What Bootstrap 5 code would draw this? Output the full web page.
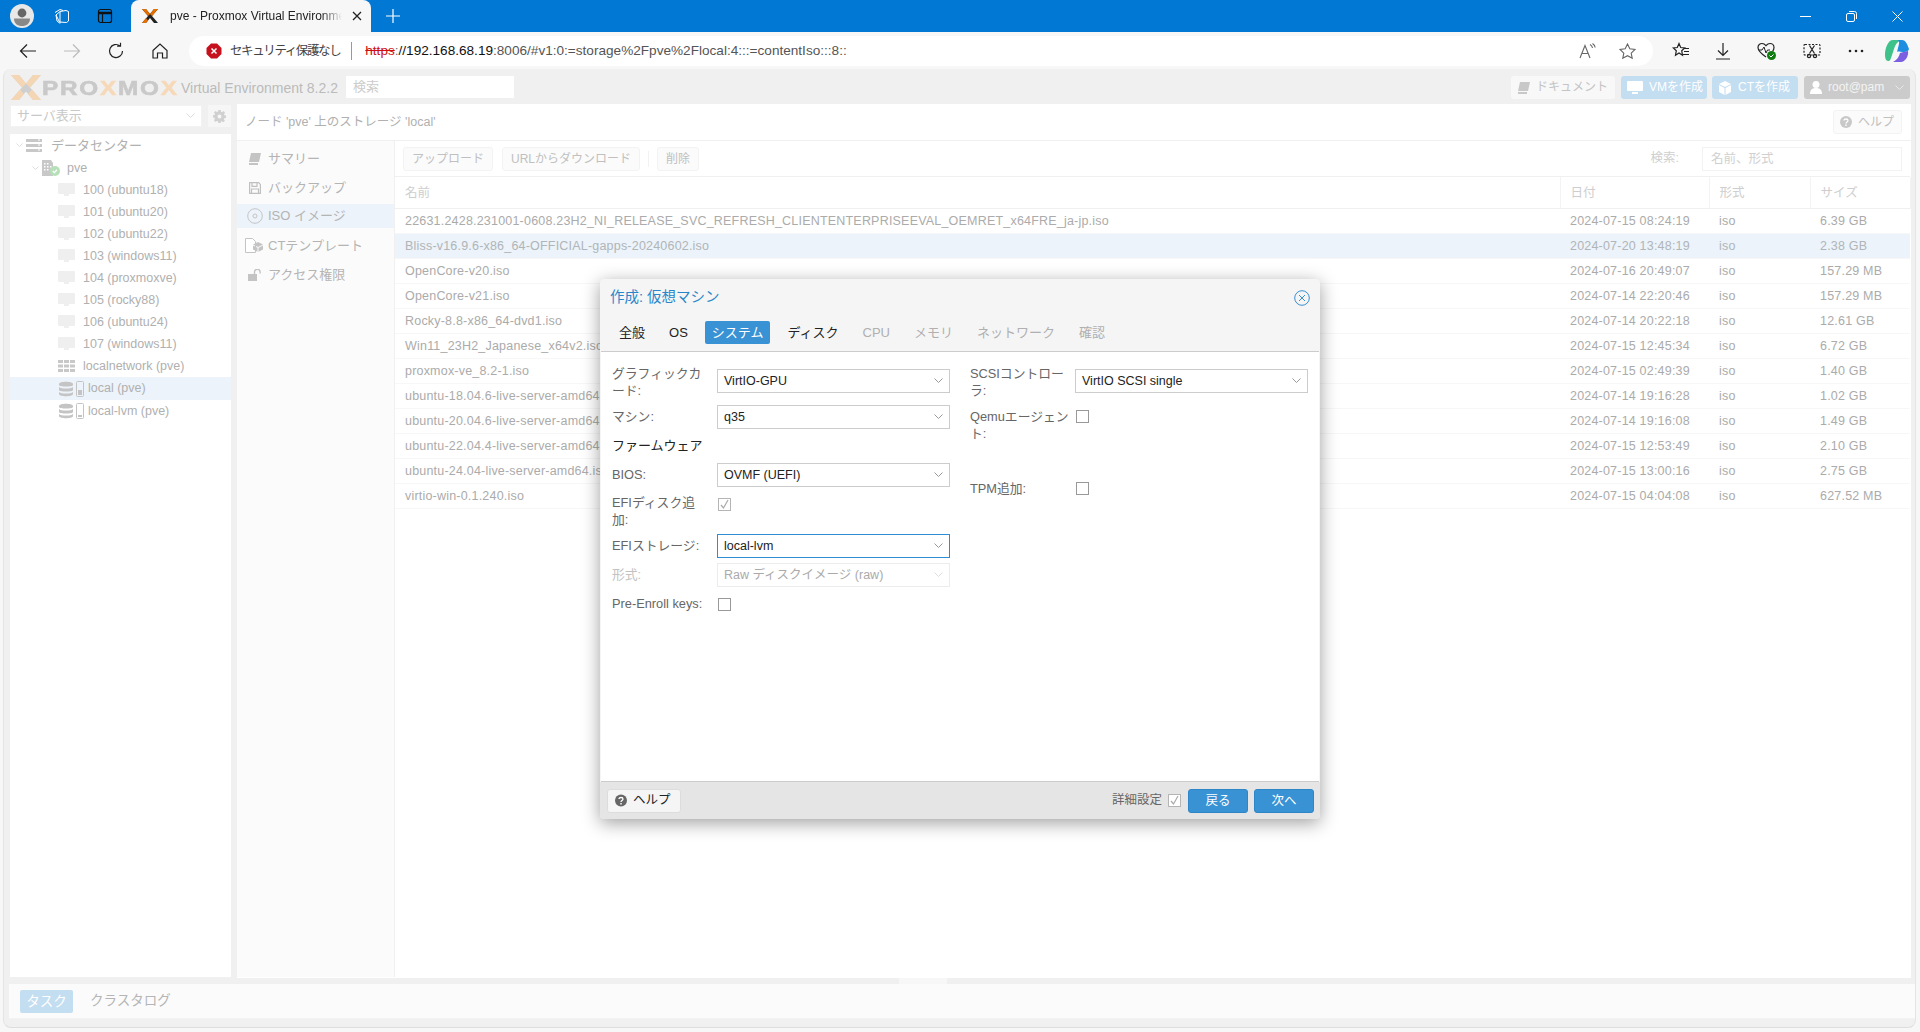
<!doctype html>
<html lang="ja">
<head>
<meta charset="utf-8">
<title>pve - Proxmox Virtual Environment</title>
<link href="https://cdn.jsdelivr.net/npm/bootstrap@5.3.0/dist/css/bootstrap.min.css" rel="stylesheet">
<style>
html,body{height:100%;overflow:hidden}
body{background:#f7f7f7;font-family:"Liberation Sans","Noto Sans CJK JP",sans-serif;font-size:13px;color:#aaa;position:relative}
.win-bar{height:32px;background:#0078d4;color:#fff;flex:none}
.w-ic{flex:none;display:block}
.tab-shape{width:240px;height:32px;margin-left:18px;background:#f7f7f7;border-radius:8px 8px 0 0;color:#222;font-size:12px;padding:0 8px 0 10px}
.tab-title{white-space:nowrap;overflow:hidden;width:172px;margin-left:11px;-webkit-mask-image:linear-gradient(90deg,#000 88%,transparent);mask-image:linear-gradient(90deg,#000 88%,transparent)}
.ctl-box{width:46px;height:32px}
.tool-bar{height:36px;background:#f7f7f7;flex:none;padding:4px 0 2px 0}
.nav-slot{width:44px}
.addr-bar{width:1464px;height:30px;margin-left:7px;background:#fff;border-radius:15px;font-size:13.6px;color:#555;padding:0 14px 0 18px;white-space:nowrap}
.addr-warn{font-size:12.5px;letter-spacing:-1.4px;color:#444}
.addr-sep{width:1px;height:18px;background:#999;margin:0 13px 0 11px}
.addr-http{color:#d01010;text-decoration:line-through}
.addr-host{color:#111}
.app-frame{position:absolute;left:3px;top:69px;width:1913px;height:959px;background:#f0f0f0;border-radius:8px;border-bottom:1px solid #ddd;border-right:1px solid #e4e4e4;border-left:1px solid #e4e4e4;overflow:hidden}
.app-head{height:35px;padding:7px 5px 0 7px}
.brand-x{width:30px;height:25px;margin-top:-1px}
.brand-word{font-family:"Liberation Sans",sans-serif;font-weight:700;font-size:21px;letter-spacing:1.5px;color:#c9c9c9;width:139px;margin-left:1px;line-height:24px;-webkit-text-stroke:.6px currentColor;transform:scaleX(1.16);transform-origin:left center;white-space:nowrap}
.brand-o{color:#f6d9b8}
.brand-ver{font-size:14px;color:#bbb;width:165px;line-height:24px}
.top-search{width:168px;height:22px;background:#fff;color:#ccc;padding:2px 7px;line-height:18px;font-size:13px}
.top-btn{height:23px;padding:0 6px;border-radius:3px;font-size:12px;line-height:23px;border:0;white-space:nowrap;display:flex;align-items:center;gap:6px}
.tb-doc{width:104px;background:#f8f8f8;color:#c4c4c4;margin-right:6px}
.tb-make{width:86px;background:#c3ddf1;color:#fff;margin-right:5px}
.tb-user{width:106px;background:#cbcbcb;color:#f4f4f4;margin-left:1px}
.main-row{height:874px}
.left-col{width:221px;margin-left:6px;flex:none}
.view-row{height:22px;margin-top:1px}
.view-sel{width:192px;height:22px;background:#fff;color:#c8c8c8;padding:0 6px;line-height:22px;border:1px solid #f2f2f2}
.gear-box{width:23px;height:22px;margin-left:6px;background:#f6f6f6}
.tree-box{width:221px;height:843px;margin-top:7px;background:#fff;padding-top:0}
.tree-row{height:22px;white-space:nowrap;color:#b0b0b0;font-size:12.5px;padding-top:0}
.tree-row.sel{background:#ecf3fa;height:23px}
.tree-dc{padding-left:6px;font-size:13px;height:23px}
.tree-pve{padding-left:22px}
.tree-vm{padding-left:48px}
.tree-st{padding-left:49px}
.tree-txt{margin-left:8px}
.tree-fold{margin-right:3px}
.content-col{width:1674px;margin-left:6px;height:874px;flex:none;background:#fff}
.crumb-bar{height:37px;background:#fff;border-bottom:1px solid #f0f0f0;padding:0 9px 0 8px;color:#b0b0b0;font-size:12.5px}
.mini-btn{height:24px;padding:0 8px;border:1px solid #f3f3f3;background:#fbfbfb;border-radius:3px;color:#c0c0c0;font-size:12px;line-height:22px;white-space:nowrap}
.help-top{width:69px;display:flex;align-items:center;gap:6px;padding:0 6px;margin-top:-1px}
.nav-col{width:158px;background:#fbfbfb;border-right:1px solid #f0f0f0;flex:none;height:836px;padding-top:3px}
.nav-item{height:29px;color:#b4b4b4;font-size:13px;padding-left:8px;white-space:nowrap}
.nav-item.active-row{background:#ecf3fa;height:24px;margin-top:2px;margin-bottom:3px}
.nav-ico{width:19px;margin-right:4px}
.iso-area{width:1515px;flex:none}
.iso-tools{height:36px;border-bottom:1px solid #f0f0f0;padding:0 8px;color:#c0c0c0}
.tool-sep{width:1px;height:16px;background:#f2f2f2;margin:0 8px}
.tool-find{width:200px;height:24px;border:1px solid #f2f2f2;color:#d0d0d0;padding:0 8px;font-size:12.5px;line-height:22px;margin-left:23px}
.iso-tbl{table-layout:fixed;width:1515px;margin:0;--bs-table-bg:transparent;font-size:12.5px;color:#ababab}
.iso-tbl th{height:31px;font-weight:400;color:#cecece;font-size:12.5px;padding:2px 10px 0;border-bottom:1px solid #f0f0f0;border-right:1px solid #f3f3f3;vertical-align:middle}
.iso-tbl td{height:25px;padding:2px 10px 0;border-bottom:1px solid #f7f7f7;vertical-align:middle;white-space:nowrap;letter-spacing:.2px}
.iso-tbl tr.pick td{background:#ecf3fa;color:#b0b5b8}
.c-name{width:1165px}.c-date{width:149px}.c-type{width:101px}.c-size{width:100px}
.split-gap{height:6px;position:relative}
.split-tip{position:absolute;left:895px;top:0;width:48px;height:6px;background:#f7f7f7}
.bottom-bar{height:35px;background:#fbfbfb;padding:0 0 0 11px;margin-left:5px;border-bottom:1px solid #f3f3f3}
.task-tab{width:53px;height:23px;background:#c3ddf1;color:#fff;text-align:center;line-height:23px;border-radius:2px;font-size:13.5px}
.log-tab{margin-left:17px;color:#b5b5b5;font-size:13.5px}
.vm-dialog{position:absolute;left:600px;top:279px;width:720px;height:540px;background:#f5f5f5;border-radius:4px;box-shadow:0 4px 18px rgba(0,0,0,.38);z-index:10;overflow:hidden}
.dlg-head{height:36px;padding:1px 10px 0 10px;color:#2a86ca;font-size:14.5px}
.dlg-tabs{height:36px;padding:6px 0 0 12px;gap:10px;color:#222}
.dlg-tab{height:23px;line-height:23px;padding:0 7px;border-radius:2px;white-space:nowrap;font-size:13px}
.dlg-tab.on{background:#3892d4;color:#fff}
.dlg-tab.off{color:#b0b0b0}
.dlg-panel{height:431px;margin:0 1px;background:#fff;border-top:1px solid #ccc;border-bottom:1px solid #ccc;padding:17px 0 0 11px;color:#666;line-height:17px}
.dlg-colL{width:358px;flex:none}
.dlg-colR{width:338px;flex:none}
.frow{display:flex;align-items:center}
.flabel{width:105px;flex:none;font-size:12.8px;color:#666;white-space:nowrap;padding-bottom:1px}
.combo{width:233px;height:24px;border:1px solid #ccc;background:#fff;color:#222;padding:0 6px;font-size:12.5px;line-height:24px;flex:none}
.combo.focus{border-color:#2f8ed3}
.combo.dim{color:#aaa;border-color:#ececec}
.chk{display:block;width:13px;height:13px;border:1px solid #999;background:#fff;flex:none}
.chk.tick{border-color:#b5b5b5;position:relative}
.r-36{height:36px}.r-24{height:24px}
.after-5{margin-top:5px}.after-7{margin-top:7px}
.fw-title{height:17px;margin:8px 0 9px;color:#222;font-size:13px}
.dlg-foot{height:37px;background:#e5e5e5;padding:0 6px 0 7px}
.help-btn{width:74px;height:24px;background:#f5f5f5;border:1px solid #ddd;border-radius:3px;color:#222;font-size:12.5px;gap:6px;padding:0 7px}
.act-btn{width:60px;height:24px;background:#3892d4;border:1px solid #2f86c7;border-radius:3px;color:#fff;font-size:12.5px;padding:0;line-height:22px}
.muted-lbl{color:#666;font-size:12.5px;margin-right:6px}
.dim-lbl{color:#c2c2c2}
</style>
</head>
<body>
<div class="d-flex flex-column">
  <div class="win-bar d-flex align-items-start">
    <div class="d-flex align-items-center" style="height:32px;padding-left:10px">
      <svg class="w-ic" width="24" height="24" viewBox="0 0 24 24"><circle cx="12" cy="12" r="12" fill="#e8e8e8"/><circle cx="12" cy="9" r="4.400" fill="#666"/><path d="M4 14.500h16c0 5-3.500 7.500-8 7.500s-8-2.500-8-7.500z" fill="#888"/></svg>
      <svg class="w-ic" style="margin-left:19px" width="18" height="18" viewBox="0 0 18 18" fill="none" stroke="#fff" stroke-width="1"><path d="M2 5.500l5-3 3 1"/><path d="M3 8l4-3.500 6-1 2.500 1v9.500l-2 1.500-7-.5z"/><path d="M7 5v11.500M3 8l1 6 2.500 2"/></svg>
      <svg class="w-ic" style="margin-left:26px" width="16" height="16" viewBox="0 0 16 16" fill="none" stroke="#111" stroke-width="1.200"><rect x="1.500" y="1.500" width="13" height="13" rx="2"/><path d="M1.500 5h13" stroke-width="2.500"/><path d="M5.500 5v9"/></svg>
    </div>
    <div class="tab-shape d-flex align-items-center">
      <svg class="w-ic" width="18" height="16" viewBox="0 0 18 16"><path d="M1 1h4l4 5 4-5h4l-6 7 6 7h-4l-4-5-4 5H1l6-7z" fill="#222"/><path d="M1 1h4l4 5-2 2zM17 1h-4l-4 5 2 2zM1 15h4l2-2.500-2-2.500z" fill="#e57000"/></svg>
      <div class="tab-title">pve - Proxmox Virtual Environment</div>
      <svg class="w-ic ms-auto" width="12" height="12" viewBox="0 0 12 12" stroke="#222" stroke-width="1.300"><path d="M2 2l8 8M10 2l-8 8"/></svg>
    </div>
    <div class="d-flex align-items-center" style="height:32px;margin-left:15px">
      <svg class="w-ic" width="14" height="14" viewBox="0 0 14 14" stroke="#fff" stroke-width="1.200"><path d="M7 0v14M0 7h14"/></svg>
    </div>
    <div class="ms-auto d-flex">
      <div class="ctl-box d-flex align-items-center justify-content-center"><svg width="11" height="11" viewBox="0 0 11 11" stroke="#fff"><path d="M0 5.500h11"/></svg></div>
      <div class="ctl-box d-flex align-items-center justify-content-center"><svg width="11" height="11" viewBox="0 0 11 11" fill="none" stroke="#fff"><rect x=".5" y="2.500" width="8" height="8" rx="1.500"/><path d="M3 .5h5.500a2 2 0 012 2V8"/></svg></div>
      <div class="ctl-box d-flex align-items-center justify-content-center"><svg width="11" height="11" viewBox="0 0 11 11" stroke="#fff"><path d="M.5.5l10 10M10.500.5l-10 10"/></svg></div>
    </div>
  </div>
  <div class="tool-bar d-flex align-items-center">
    <div class="nav-slot d-flex justify-content-center" style="margin-left:6px"><svg width="18" height="18" viewBox="0 0 18 18" fill="none" stroke="#222" stroke-width="1.200"><path d="M17 9H1.500M8 2.500L1.500 9 8 15.500"/></svg></div>
    <div class="nav-slot d-flex justify-content-center"><svg width="18" height="18" viewBox="0 0 18 18" fill="none" stroke="#bbb" stroke-width="1.200"><path d="M1 9h15.500M10 2.500L16.500 9 10 15.500"/></svg></div>
    <div class="nav-slot d-flex justify-content-center"><svg width="18" height="18" viewBox="0 0 18 18" fill="none" stroke="#222" stroke-width="1.200"><path d="M15.500 9a6.500 6.500 0 11-2.500-5.100M13.500 .8v3.400h-3.400"/></svg></div>
    <div class="nav-slot d-flex justify-content-center"><svg width="18" height="18" viewBox="0 0 18 18" fill="none" stroke="#222" stroke-width="1.200"><path d="M2 8.500L9 2l7 6.500V16h-4.500v-5h-5v5H2z"/></svg></div>
    <div class="addr-bar d-flex align-items-center">
      <svg class="w-ic" width="16" height="16" viewBox="0 0 16 16" style="margin:0 8px 0 -1px"><path d="M5 .5h6L15.500 5v6L11 15.500H5L.5 11V5z" fill="#c6101d"/><path d="M5.500 5.500l5 5M10.500 5.500l-5 5" stroke="#fff" stroke-width="1.500"/></svg>
      <span class="addr-warn">セキュリティ保護なし</span>
      <span class="addr-sep"></span>
      <span><span class="addr-http">https</span><span style="color:#777">:</span><span class="addr-host">//192.168.68.19</span>:8006/#v1:0:=storage%2Fpve%2Flocal:4:::=contentIso:::8::</span>
      <svg class="w-ic ms-auto" style="margin-right:22px" width="18" height="16" viewBox="0 0 18 16" fill="none" stroke="#666" stroke-width="1.100"><path d="M1 15L6 2.500 11 15M2.800 10.500h6.500M11 1.500c1.500.8 2.300 2 2.500 3.500M13.500 .5c1.500 1 2.500 2.300 2.700 4"/></svg>
      <svg class="w-ic" style="margin-right:3px" width="17" height="17" viewBox="0 0 17 17" fill="none" stroke="#666" stroke-width="1.100"><path d="M8.500 1l2.300 4.800 5.200.7-3.800 3.600 1 5.200-4.700-2.600-4.700 2.600 1-5.200L1 6.500l5.200-.7z"/></svg>
    </div>
    <svg class="w-ic" style="margin-left:19px" width="18" height="18" viewBox="0 0 18 18" fill="none" stroke="#222" stroke-width="1.200"><path d="M7 1.500l1.700 4 4 .4-3 2.800.8 4.500-3.500-2.200-3.500 2.200.8-4.500-3-2.800 4-.4zM12 6.500h5M12 9.500h5M11 12.500h6"/></svg>
    <svg class="w-ic" style="margin-left:26px" width="14" height="18" viewBox="0 0 14 18" fill="none" stroke="#222" stroke-width="1.200"><path d="M7 1v12M2 8.500L7 13.500l5-5M0 17h14"/></svg>
    <svg class="w-ic" style="margin-left:27px" width="20" height="18" viewBox="0 0 20 18" fill="none"><path d="M9 15C4 11.500 1 9 1 5.500 1 3 3 1.500 5 1.500c1.700 0 3 1 4 2.200 1-1.200 2.300-2.200 4-2.200 2 0 4 1.500 4 4 0 1.500-.5 2.700-1.500 4" stroke="#222" stroke-width="1.200"/><path d="M2 8h3l2-3 2 6 1.500-3H13" stroke="#222"/><circle cx="14.500" cy="13.500" r="4.500" fill="#107c10"/><path d="M12.500 13.500l1.500 1.500 2.500-2.500" stroke="#fff"/></svg>
    <svg class="w-ic" style="margin-left:26px" width="18" height="18" viewBox="0 0 18 18" fill="none" stroke="#222" stroke-width="1.200"><rect x="1" y="2.500" width="16" height="10.500" rx="1" stroke-dasharray="2 1.500"/><path d="M6.500 3.500l5 8M11.500 3.500l-5 8"/><circle cx="6" cy="14" r="1.600"/><circle cx="12" cy="14" r="1.600"/></svg>
    <svg class="w-ic" style="margin-left:27px" width="16" height="4" viewBox="0 0 16 4" fill="#222"><circle cx="2" cy="2" r="1.300"/><circle cx="8" cy="2" r="1.300"/><circle cx="14" cy="2" r="1.300"/></svg>
    <svg class="w-ic" style="margin-left:21px" width="24" height="24" viewBox="0 0 24 24"><path d="M8 1h8c-4 2-6 5-7 9l-3 9c-1 3-2 3-3 3-2 0-3-3-3-6C0 9 3 1 8 1z" fill="#3fc18a"/><path d="M12 1h5c3 0 5 3 7 9 0 1-2 3-5 3-4 0-6-1-7 0l2-8c.5-2-.5-4-2-4z" fill="#1e8fe0"/><path d="M16 23H8c4-2 6-5 7-9 2-1 5-1 8-2 1 5-3 11-7 11z" fill="#7b5fe0"/></svg>
  </div>
</div>

<div class="app-frame d-flex flex-column">
  <div class="app-head d-flex align-items-start">
    <svg class="brand-x w-ic" viewBox="0 0 30 25"><path d="M0 0h8l7 8.500L22 0h8L19 12.500 30 25h-8l-7-8.500L8 25H0l11-12.500z" fill="#cfcfcf"/><path d="M0 0h8l7 8.500-4 4zM30 0h-8l-7 8.500 4 4zM0 25h8l5-6-4-4.500zM30 25h-8l-5-6 4-4.500z" fill="#f5d6b4"/></svg>
    <div class="brand-word">PRO<span class="brand-o">X</span>MO<span class="brand-o">X</span></div>
    <div class="brand-ver">Virtual Environment 8.2.2</div>
    <div class="top-search">検索</div>
    <button class="btn top-btn tb-doc ms-auto" type="button">
      <svg class="w-ic" width="13" height="12" viewBox="0 0 13 12" fill="#c8c8c8"><path d="M3 0h10l-2 9H1zM1 10h9v2H1z"/></svg><span>ドキュメント</span>
    </button>
    <button class="btn top-btn tb-make" type="button">
      <svg class="w-ic" width="16" height="14" viewBox="0 0 16 14" fill="#fff"><path d="M1 0h14a1 1 0 011 1v8a1 1 0 01-1 1H1a1 1 0 01-1-1V1a1 1 0 011-1zM5 11h6v2H5z"/></svg><span>VMを作成</span>
    </button>
    <button class="btn top-btn tb-make" type="button">
      <svg class="w-ic" width="14" height="14" viewBox="0 0 14 14" fill="#fff"><path d="M7 0l6 3-6 3-6-3zM1 4l5.500 3v7L1 11zM13 4L7.500 7v7l5.500-3z"/></svg><span>CTを作成</span>
    </button>
    <button class="btn top-btn tb-user" type="button">
      <svg class="w-ic" width="12" height="13" viewBox="0 0 12 13" fill="#fff"><circle cx="6" cy="3.500" r="3.500"/><path d="M0 13c0-4 2-6 6-6s6 2 6 6z"/></svg><span>root@pam</span>
      <svg class="w-ic ms-auto" width="9" height="6" viewBox="0 0 9 6" fill="none" stroke="#e8e8e8"><path d="M.5 .5l4 4 4-4"/></svg>
    </button>
  </div>
  <div class="main-row d-flex">
    <div class="left-col">
      <div class="view-row d-flex">
        <div class="view-sel d-flex align-items-center justify-content-between"><span>サーバ表示</span><svg width="9" height="6" viewBox="0 0 9 6" fill="none" stroke="#ddd"><path d="M.5 .5l4 4 4-4"/></svg></div>
        <div class="gear-box d-flex align-items-center justify-content-center"><svg width="13" height="13" viewBox="0 0 13 13" fill="#d0d0d0"><path d="M5.300 0h2.400l.3 1.800 1 .4L10.500 1l1.600 1.700-1.100 1.500.4 1 1.600.3v2.300l-1.700.4-.4 1 1 1.500-1.600 1.600-1.500-1-1 .4L7.700 13H5.300L5 11.300l-1-.4-1.500 1-1.600-1.600 1-1.500-.4-1L0 7.500V5.200l1.600-.3.400-1L1 2.500 2.600 1 4 2.100l1-.4zM6.500 4.500a2 2 0 100 4 2 2 0 000-4z"/></svg></div>
      </div>
      <div class="tree-box">
        <div class="tree-row tree-dc d-flex align-items-center"><svg class="w-ic tree-fold" width="7" height="5" viewBox="0 0 7 5" fill="none" stroke="#ddd"><path d="M.5 .5l3 3 3-3"/></svg><svg class="w-ic" width="16" height="13" viewBox="0 0 16 13" fill="#c8c8c8"><path d="M0 0h16v3H0zM0 5h16v3H0zM0 10h16v3H0z"/><path d="M12 1h2M12 6h2M12 11h2" stroke="#fff"/></svg><span style="margin-left:9px">データセンター</span></div>
        <div class="tree-row tree-pve d-flex align-items-center"><svg class="w-ic tree-fold" width="7" height="5" viewBox="0 0 7 5" fill="none" stroke="#ddd"><path d="M.5 .5l3 3 3-3"/></svg><svg class="w-ic" width="18" height="16" viewBox="0 0 18 16"><path d="M0 0h9l2 3v13H0z" fill="#c8c8c8"/><path d="M2 3h1.500v1.500H2zM5 3h1.500v1.500H5zM2 6h1.500v1.500H2zM5 6h1.500v1.500H5zM8 6h1.500v1.500H8zM2 9h1.500v1.500H2zM5 9h1.500v1.500H5z" fill="#fff"/><circle cx="13" cy="11" r="5" fill="#b6e0b8"/><path d="M10.800 11l1.600 1.600 2.600-2.800" stroke="#fff" stroke-width="1.300" fill="none"/></svg><span style="margin-left:7px">pve</span></div>
        <div class="tree-row tree-vm d-flex align-items-center"><svg class="w-ic" width="17" height="14" viewBox="0 0 17 14" fill="#efefef"><path d="M1 0h15a1 1 0 011 1v9a1 1 0 01-1 1H1a1 1 0 01-1-1V1a1 1 0 011-1zM6 11h5v2H6z"/></svg><span class="tree-txt">100 (ubuntu18)</span></div>
        <div class="tree-row tree-vm d-flex align-items-center"><svg class="w-ic" width="17" height="14" viewBox="0 0 17 14" fill="#efefef"><path d="M1 0h15a1 1 0 011 1v9a1 1 0 01-1 1H1a1 1 0 01-1-1V1a1 1 0 011-1zM6 11h5v2H6z"/></svg><span class="tree-txt">101 (ubuntu20)</span></div>
        <div class="tree-row tree-vm d-flex align-items-center"><svg class="w-ic" width="17" height="14" viewBox="0 0 17 14" fill="#efefef"><path d="M1 0h15a1 1 0 011 1v9a1 1 0 01-1 1H1a1 1 0 01-1-1V1a1 1 0 011-1zM6 11h5v2H6z"/></svg><span class="tree-txt">102 (ubuntu22)</span></div>
        <div class="tree-row tree-vm d-flex align-items-center"><svg class="w-ic" width="17" height="14" viewBox="0 0 17 14" fill="#efefef"><path d="M1 0h15a1 1 0 011 1v9a1 1 0 01-1 1H1a1 1 0 01-1-1V1a1 1 0 011-1zM6 11h5v2H6z"/></svg><span class="tree-txt">103 (windows11)</span></div>
        <div class="tree-row tree-vm d-flex align-items-center"><svg class="w-ic" width="17" height="14" viewBox="0 0 17 14" fill="#efefef"><path d="M1 0h15a1 1 0 011 1v9a1 1 0 01-1 1H1a1 1 0 01-1-1V1a1 1 0 011-1zM6 11h5v2H6z"/></svg><span class="tree-txt">104 (proxmoxve)</span></div>
        <div class="tree-row tree-vm d-flex align-items-center"><svg class="w-ic" width="17" height="14" viewBox="0 0 17 14" fill="#efefef"><path d="M1 0h15a1 1 0 011 1v9a1 1 0 01-1 1H1a1 1 0 01-1-1V1a1 1 0 011-1zM6 11h5v2H6z"/></svg><span class="tree-txt">105 (rocky88)</span></div>
        <div class="tree-row tree-vm d-flex align-items-center"><svg class="w-ic" width="17" height="14" viewBox="0 0 17 14" fill="#efefef"><path d="M1 0h15a1 1 0 011 1v9a1 1 0 01-1 1H1a1 1 0 01-1-1V1a1 1 0 011-1zM6 11h5v2H6z"/></svg><span class="tree-txt">106 (ubuntu24)</span></div>
        <div class="tree-row tree-vm d-flex align-items-center"><svg class="w-ic" width="17" height="14" viewBox="0 0 17 14" fill="#efefef"><path d="M1 0h15a1 1 0 011 1v9a1 1 0 01-1 1H1a1 1 0 01-1-1V1a1 1 0 011-1zM6 11h5v2H6z"/></svg><span class="tree-txt">107 (windows11)</span></div>
        <div class="tree-row tree-vm d-flex align-items-center"><svg class="w-ic" width="17" height="12" viewBox="0 0 17 12" fill="#c8c8c8"><path d="M0 0h5v3H0zM6 0h5v3H6zM12 0h5v3h-5zM0 4.500h5v3H0zM6 4.500h5v3H6zM12 4.500h5v3h-5zM0 9h5v3H0zM6 9h5v3H6zM12 9h5v3h-5z"/></svg><span class="tree-txt">localnetwork (pve)</span></div>
        <div class="tree-row tree-st sel d-flex align-items-center"><svg class="w-ic" width="25" height="16" viewBox="0 0 25 16"><path d="M0 3c0-3 14-3 14 0v1c0 2-14 2-14 0zM0 6c2 2 12 2 14 0v3c0 2-14 2-14 0zM0 11c2 2 12 2 14 0v2c0 3-14 3-14 0z" fill="#c4c4c4"/><rect x="17.500" y=".5" width="7" height="15" rx="1" fill="none" stroke="#c4c4c4"/><rect x="19" y="9" width="4" height="5" fill="#c4c4c4"/></svg><span style="margin-left:4px">local (pve)</span></div>
        <div class="tree-row tree-st d-flex align-items-center"><svg class="w-ic" width="25" height="16" viewBox="0 0 25 16"><path d="M0 3c0-3 14-3 14 0v1c0 2-14 2-14 0zM0 6c2 2 12 2 14 0v3c0 2-14 2-14 0zM0 11c2 2 12 2 14 0v2c0 3-14 3-14 0z" fill="#c4c4c4"/><rect x="17.500" y=".5" width="7" height="15" rx="1" fill="none" stroke="#c4c4c4"/><rect x="19" y="12" width="4" height="2" fill="#c4c4c4"/></svg><span style="margin-left:4px">local-lvm (pve)</span></div>
      </div>
    </div>
    <div class="content-col">
      <div class="crumb-bar d-flex align-items-center justify-content-between">
        <span>ノード 'pve' 上のストレージ 'local'</span>
        <button class="btn mini-btn help-top" type="button"><svg class="w-ic" width="12" height="12" viewBox="0 0 12 12"><circle cx="6" cy="6" r="6" fill="#c8c8c8"/><path d="M4 4.500C4 2.500 8 2.500 8 4.500c0 1.500-2 1.500-2 3" fill="none" stroke="#fff" stroke-width="1.300"/><path d="M5.300 8.500h1.400V10H5.300z" fill="#fff"/></svg><span>ヘルプ</span></button>
      </div>
      <div class="d-flex">
        <div class="nav-col">
          <div class="nav-item d-flex align-items-center"><span class="nav-ico d-flex justify-content-center"><svg width="13" height="12" viewBox="0 0 13 12" fill="#c4c4c4"><path d="M3 0h10l-2 9H1zM1 10h9v2H1z"/></svg></span>サマリー</div>
          <div class="nav-item d-flex align-items-center"><span class="nav-ico d-flex justify-content-center"><svg width="12" height="12" viewBox="0 0 12 12" fill="none" stroke="#c0c0c0" stroke-width="1.200"><path d="M.6.6h9l1.800 1.800v9H.6zM3 .8v3.500h5V.8M2.500 11V7h7v4"/></svg></span>バックアップ</div>
          <div class="nav-item active-row d-flex align-items-center"><span class="nav-ico d-flex justify-content-center"><svg width="16" height="16" viewBox="0 0 16 16" fill="none" stroke="#c4c4c4"><circle cx="8" cy="8" r="7.300"/><circle cx="8" cy="8" r="2"/></svg></span>ISO イメージ</div>
          <div class="nav-item d-flex align-items-center"><span class="nav-ico d-flex justify-content-center"><svg width="19" height="15" viewBox="0 0 19 15"><path d="M.5.5h7l3 3v11H.5z" fill="#fff" stroke="#c4c4c4"/><path d="M13 4l5 2.500L13 9 8 6.500zM8 7.500l4.500 2.300v4L8 11.500zM18 7.500l-4.500 2.300v4l4.500-2.300z" fill="#c4c4c4"/></svg></span>CTテンプレート</div>
          <div class="nav-item d-flex align-items-center"><span class="nav-ico d-flex justify-content-center"><svg width="14" height="12" viewBox="0 0 14 12"><rect y="5" width="9" height="7" fill="#c4c4c4"/><path d="M6.500 5V3a2.800 2.800 0 015.600 0v1.500" fill="none" stroke="#c4c4c4" stroke-width="1.400"/></svg></span>アクセス権限</div>
        </div>
        <div class="iso-area">
          <div class="iso-tools d-flex align-items-center">
            <button class="btn mini-btn" type="button">アップロード</button>
            <button class="btn mini-btn" style="margin-left:9px" type="button">URLからダウンロード</button>
            <span class="tool-sep"></span>
            <button class="btn mini-btn" type="button">削除</button>
            <span class="ms-auto" style="font-size:12.500px;color:#cfcfcf">検索:</span>
            <div class="tool-find">名前、形式</div>
          </div>
          <table class="table iso-tbl">
            <thead><tr><th class="c-name">名前</th><th class="c-date">日付</th><th class="c-type">形式</th><th class="c-size">サイズ</th></tr></thead>
            <tbody>
              <tr><td>22631.2428.231001-0608.23H2_NI_RELEASE_SVC_REFRESH_CLIENTENTERPRISEEVAL_OEMRET_x64FRE_ja-jp.iso</td><td>2024-07-15 08:24:19</td><td>iso</td><td>6.39 GB</td></tr>
              <tr class="pick"><td>Bliss-v16.9.6-x86_64-OFFICIAL-gapps-20240602.iso</td><td>2024-07-20 13:48:19</td><td>iso</td><td>2.38 GB</td></tr>
              <tr><td>OpenCore-v20.iso</td><td>2024-07-16 20:49:07</td><td>iso</td><td>157.29 MB</td></tr>
              <tr><td>OpenCore-v21.iso</td><td>2024-07-14 22:20:46</td><td>iso</td><td>157.29 MB</td></tr>
              <tr><td>Rocky-8.8-x86_64-dvd1.iso</td><td>2024-07-14 20:22:18</td><td>iso</td><td>12.61 GB</td></tr>
              <tr><td>Win11_23H2_Japanese_x64v2.iso</td><td>2024-07-15 12:45:34</td><td>iso</td><td>6.72 GB</td></tr>
              <tr><td>proxmox-ve_8.2-1.iso</td><td>2024-07-15 02:49:39</td><td>iso</td><td>1.40 GB</td></tr>
              <tr><td>ubuntu-18.04.6-live-server-amd64.iso</td><td>2024-07-14 19:16:28</td><td>iso</td><td>1.02 GB</td></tr>
              <tr><td>ubuntu-20.04.6-live-server-amd64.iso</td><td>2024-07-14 19:16:08</td><td>iso</td><td>1.49 GB</td></tr>
              <tr><td>ubuntu-22.04.4-live-server-amd64.iso</td><td>2024-07-15 12:53:49</td><td>iso</td><td>2.10 GB</td></tr>
              <tr><td>ubuntu-24.04-live-server-amd64.iso</td><td>2024-07-15 13:00:16</td><td>iso</td><td>2.75 GB</td></tr>
              <tr><td>virtio-win-0.1.240.iso</td><td>2024-07-15 04:04:08</td><td>iso</td><td>627.52 MB</td></tr>
            </tbody>
          </table>
        </div>
      </div>
    </div>
  </div>
  <div class="split-gap"><div class="split-tip"></div></div>
  <div class="bottom-bar d-flex align-items-center">
    <div class="task-tab">タスク</div>
    <div class="log-tab">クラスタログ</div>
  </div>
</div>

<div class="vm-dialog d-flex flex-column">
  <div class="dlg-head d-flex align-items-center justify-content-between">
    <span>作成: 仮想マシン</span>
    <svg class="w-ic" width="16" height="16" viewBox="0 0 16 16" fill="none" stroke="#3a8fcf"><circle cx="8" cy="8" r="7.300"/><path d="M5 5l6 6M11 5l-6 6"/></svg>
  </div>
  <div class="dlg-tabs d-flex">
    <div class="dlg-tab">全般</div>
    <div class="dlg-tab">OS</div>
    <div class="dlg-tab on">システム</div>
    <div class="dlg-tab">ディスク</div>
    <div class="dlg-tab off">CPU</div>
    <div class="dlg-tab off">メモリ</div>
    <div class="dlg-tab off">ネットワーク</div>
    <div class="dlg-tab off">確認</div>
  </div>
  <div class="dlg-panel d-flex">
    <div class="dlg-colL">
      <div class="frow r-36 align-items-start">
        <div class="flabel" style="margin-top:-4px">グラフィックカ<br>ード:</div>
        <div class="combo d-flex justify-content-between align-items-center"><span>VirtIO-GPU</span><svg class="w-ic" width="9" height="6" viewBox="0 0 9 6" fill="none" stroke="#999"><path d="M.5 .5l4 4 4-4"/></svg></div>
      </div>
      <div class="frow r-24">
        <div class="flabel">マシン:</div>
        <div class="combo d-flex justify-content-between align-items-center"><span>q35</span><svg class="w-ic" width="9" height="6" viewBox="0 0 9 6" fill="none" stroke="#999"><path d="M.5 .5l4 4 4-4"/></svg></div>
      </div>
      <div class="fw-title">ファームウェア</div>
      <div class="frow r-24">
        <div class="flabel">BIOS:</div>
        <div class="combo d-flex justify-content-between align-items-center"><span>OVMF (UEFI)</span><svg class="w-ic" width="9" height="6" viewBox="0 0 9 6" fill="none" stroke="#999"><path d="M.5 .5l4 4 4-4"/></svg></div>
      </div>
      <div class="frow align-items-start after-7" style="height:40px">
        <div class="flabel">EFIディスク追<br>加:</div>
        <span class="chk tick" style="margin:4px 0 0 1px"><svg class="w-ic" width="11" height="11" viewBox="0 0 11 11" fill="none" stroke="#aaa" stroke-width="1.200"><path d="M2 6l2.500 3L9 1"/></svg></span>
      </div>
      <div class="frow r-24">
        <div class="flabel">EFIストレージ:</div>
        <div class="combo focus d-flex justify-content-between align-items-center"><span>local-lvm</span><svg class="w-ic" width="9" height="6" viewBox="0 0 9 6" fill="none" stroke="#999"><path d="M.5 .5l4 4 4-4"/></svg></div>
      </div>
      <div class="frow r-24 after-5">
        <div class="flabel dim-lbl">形式:</div>
        <div class="combo dim d-flex justify-content-between align-items-center"><span>Raw ディスクイメージ (raw)</span><svg class="w-ic" width="9" height="6" viewBox="0 0 9 6" fill="none" stroke="#ddd"><path d="M.5 .5l4 4 4-4"/></svg></div>
      </div>
      <div class="frow r-24 after-5">
        <div class="flabel">Pre-Enroll keys:</div>
        <span class="chk" style="margin-left:1px"></span>
      </div>
    </div>
    <div class="dlg-colR">
      <div class="frow r-36 align-items-start">
        <div class="flabel" style="margin-top:-4px">SCSIコントロー<br>ラ:</div>
        <div class="combo d-flex justify-content-between align-items-center"><span>VirtIO SCSI single</span><svg class="w-ic" width="9" height="6" viewBox="0 0 9 6" fill="none" stroke="#999"><path d="M.5 .5l4 4 4-4"/></svg></div>
      </div>
      <div class="frow align-items-start" style="height:72px">
        <div class="flabel" style="margin-top:3px">Qemuエージェン<br>ト:</div>
        <span class="chk" style="margin:5px 0 0 1px"></span>
      </div>
      <div class="frow" style="height:23px">
        <div class="flabel">TPM追加:</div>
        <span class="chk" style="margin-left:1px"></span>
      </div>
    </div>
  </div>
  <div class="dlg-foot d-flex align-items-center">
    <button class="btn help-btn d-flex align-items-center" type="button"><svg class="w-ic" width="12" height="13" viewBox="0 0 12 13"><circle cx="6" cy="6.500" r="6" fill="#666"/><path d="M4 5C4 3 8 3 8 5c0 1.500-2 1.500-2 3" fill="none" stroke="#fff" stroke-width="1.300"/><path d="M5.300 9h1.400v1.500H5.300z" fill="#fff"/></svg><span>ヘルプ</span></button>
    <span class="muted-lbl ms-auto">詳細設定</span>
    <span class="chk tick" style="margin-right:7px"><svg class="w-ic" width="11" height="11" viewBox="0 0 11 11" fill="none" stroke="#aaa" stroke-width="1.200"><path d="M2 6l2.500 3L9 1"/></svg></span>
    <button class="btn act-btn" type="button">戻る</button>
    <button class="btn act-btn" style="margin-left:6px" type="button">次へ</button>
  </div>
</div>
</body>
</html>
